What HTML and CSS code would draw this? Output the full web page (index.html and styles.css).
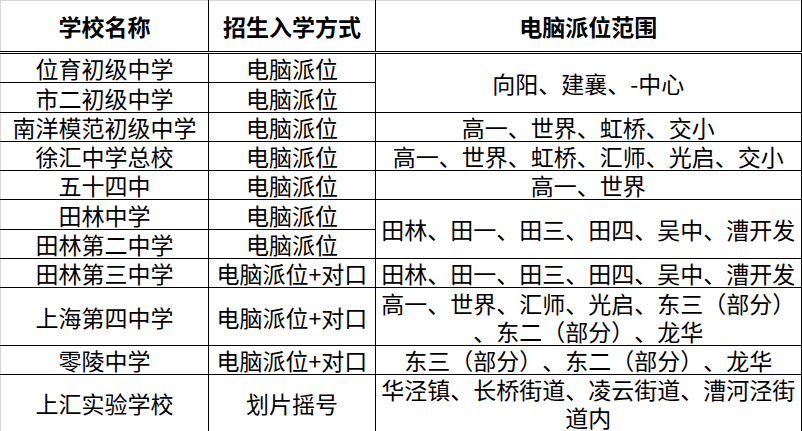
FILE: index.html
```html
<!DOCTYPE html>
<html lang="zh-CN">
<head>
<meta charset="utf-8">
<title>学校招生</title>
<link rel="stylesheet" href="styles.css">
</head>
<body>
<table class="grid">
  <colgroup>
    <col class="c1">
    <col class="c2">
    <col class="c3">
  </colgroup>
  <thead>
    <tr class="h-head">
      <th class="k1">学校名称</th>
      <th>招生入学方式</th>
      <th class="k3">电脑派位范围</th>
    </tr>
  </thead>
  <tbody>
    <tr class="h29"><td class="k1">位育初级中学</td><td>电脑派位</td><td class="k3" rowspan="2">向阳、建襄、-中心</td></tr>
    <tr class="h30"><td class="k1">市二初级中学</td><td>电脑派位</td></tr>
    <tr class="h29"><td class="k1">南洋模范初级中学</td><td>电脑派位</td><td class="k3">高一、世界、虹桥、交小</td></tr>
    <tr class="h28"><td class="k1">徐汇中学总校</td><td>电脑派位</td><td class="k3">高一、世界、虹桥、汇师、光启、交小</td></tr>
    <tr class="h29"><td class="k1">五十四中</td><td>电脑派位</td><td class="k3">高一、世界</td></tr>
    <tr class="h30"><td class="k1">田林中学</td><td>电脑派位</td><td class="k3" rowspan="2">田林、田一、田三、田四、吴中、漕开发</td></tr>
    <tr class="h29"><td class="k1">田林第二中学</td><td>电脑派位</td></tr>
    <tr class="h28"><td class="k1">田林第三中学</td><td>电脑派位+对口</td><td class="k3">田林、田一、田三、田四、吴中、漕开发</td></tr>
    <tr class="h58"><td class="k1">上海第四中学</td><td>电脑派位+对口</td><td class="k3">高一、世界、汇师、光启、东三（部分）<br>、东二（部分）、龙华</td></tr>
    <tr class="h29"><td class="k1">零陵中学</td><td>电脑派位+对口</td><td class="k3">东三（部分）、东二（部分）、龙华</td></tr>
    <tr class="h58 last"><td class="k1">上汇实验学校</td><td>划片摇号</td><td class="k3">华泾镇、长桥街道、凌云街道、漕河泾街<br>道内</td></tr>
  </tbody>
</table>
</body>
</html>
```

FILE: styles.css
```css
html, body {
  margin: 0;
  padding: 0;
  background: #ffffff;
}

.grid {
  border-collapse: collapse;
  table-layout: fixed;
  width: 801px;
  font-family: "Noto Sans CJK SC", "Noto Sans", sans-serif;
  font-size: 23px;
  color: #000;
  text-spacing-trim: space-all;
  border-top: 1px solid #d6d6d6;
  border-left: 1px solid #d6d6d6;
  border-right: 2px solid #000;
  border-bottom: 2px solid #000;
}

.c1 { width: 208px; }
.c2 { width: 167px; }
.c3 { width: 426px; }

.grid th,
.grid td {
  padding: 0;
  text-align: center;
  vertical-align: middle;
  line-height: 28px;
  white-space: nowrap;
  border: 1px solid #000;
}

.grid th {
  font-weight: bold;
  border-top: 1px solid #d6d6d6;
  border-bottom: 3px double #000;
}

.grid .k1 {
  border-left: 1px solid #d6d6d6;
}

.grid .k3 {
  border-right: 2px solid #000;
}

.grid .last td {
  border-bottom: 2px solid #000;
}

.h-head { height: 52px; }
.h28 { height: 28px; }
.h29 { height: 29px; }
.h30 { height: 30px; }
.h58 { height: 58px; }
```
